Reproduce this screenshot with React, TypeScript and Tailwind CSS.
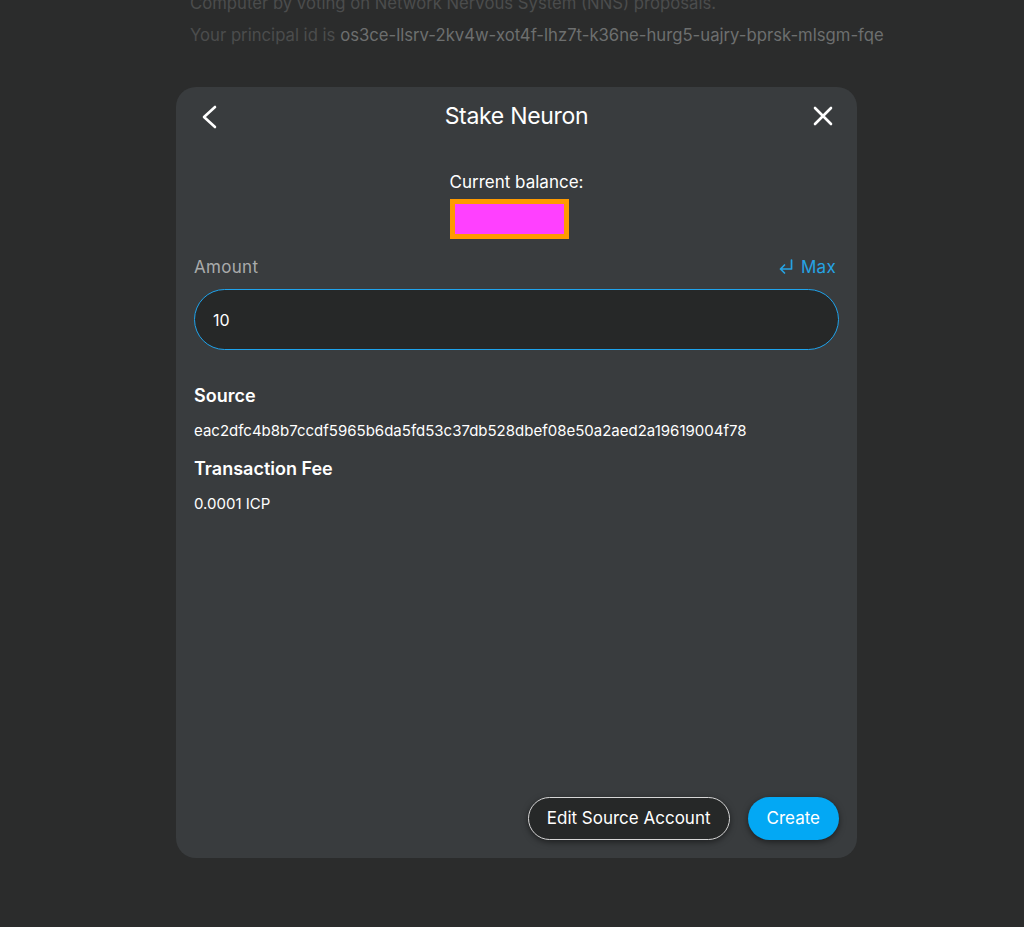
import React from "react";

const font = { fontFamily: "Inter, 'Noto Sans', sans-serif" };

function BackIcon() {
  return (
    <svg width="24" height="26" viewBox="0 0 24 26" fill="none">
      <polyline points="17,3 6,13 17,23" stroke="white" strokeWidth="2.6" strokeLinecap="round" strokeLinejoin="round" />
    </svg>
  );
}

function CloseIcon() {
  return (
    <svg width="20" height="20" viewBox="0 0 20 20" fill="none">
      <path d="M2 2 L18 18 M18 2 L2 18" stroke="white" strokeWidth="2.6" strokeLinecap="round" />
    </svg>
  );
}

function ReturnIcon() {
  return (
    <svg width="16" height="18" viewBox="0 0 16 18" fill="none">
      <path d="M13.5 2 V11 H2.5 M6.5 7 L2.5 11 L6.5 15" stroke="#26a3e4" strokeWidth="1.7" strokeLinecap="round" strokeLinejoin="round" />
    </svg>
  );
}

export default function App() {
  return (
    <div className="min-h-[927px] bg-[#2b2c2c] overflow-hidden" style={font}>
      {/* page content behind the modal */}
      <div className="-mt-[13px] pl-[190px] text-[16.7px] leading-[32px] text-[#4b4d4d]">
        <p>Computer by voting on Network Nervous System (NNS) proposals.</p>
        <p>
          Your principal id is{" "}
          <span className="text-[#6d6f6f]">os3ce-llsrv-2kv4w-xot4f-lhz7t-k36ne-hurg5-uajry-bprsk-mlsgm-fqe</span>
        </p>
      </div>

      {/* modal */}
      <div className="ml-[176px] mt-[36px] flex h-[771px] w-[681px] flex-col rounded-[20px] bg-[#393c3e] px-[18px]">
        <div className="flex h-[58px] items-center justify-between">
          <button className="flex items-center justify-center w-[30px] ml-[1px] mt-[1px]">
            <BackIcon />
          </button>
          <h2 className="text-[23px] text-white tracking-[-0.3px] mt-[1px]">Stake Neuron</h2>
          <button className="flex items-center justify-center w-[30px] mr-[1px]">
            <CloseIcon />
          </button>
        </div>

        <div className="mt-[27px] flex justify-center">
          <div className="flex flex-col items-start">
            <p className="text-[17px] leading-[20px] text-white">Current balance:</p>
            <div className="mt-[7px] h-[40px] w-[119px] border-[5px] border-[#ff9a00] bg-[#ff40ff]" />
          </div>
        </div>

        <div className="mt-[18px] flex items-center justify-between text-[17px] leading-[20px]">
          <span className="text-[#a9abab] tracking-[0.3px]">Amount</span>
          <span className="flex items-center gap-[7px] text-[#26a3e4] mr-[3px] tracking-[0.3px]">
            <ReturnIcon />
            Max
          </span>
        </div>

        <div className="mt-[12px] flex h-[61px] items-center rounded-full border-[1.5px] border-[#1fa3ec] bg-[#262828] px-[18px]">
          <span className="text-[16px] text-white">10</span>
        </div>

        <div className="mt-[35px] text-white">
          <h3 className="text-[18px] font-semibold leading-[22px]">Source</h3>
          <p className="mt-[15px] text-[15px] leading-[18px]">eac2dfc4b8b7ccdf5965b6da5fd53c37db528dbef08e50a2aed2a19619004f78</p>
          <h3 className="mt-[18px] text-[18px] font-semibold leading-[22px]">Transaction Fee</h3>
          <p className="mt-[15px] text-[15px] leading-[18px]">0.0001 ICP</p>
        </div>

        <div className="mt-auto mb-[18px] flex justify-end gap-[18px]">
          <button className="h-[43px] rounded-full border-[1.5px] border-[#d6d6d6] bg-[#262828] px-[18px] text-[17px] text-white shadow-[0_2px_6px_rgba(0,0,0,0.5)]">
            Edit Source Account
          </button>
          <button className="h-[43px] rounded-full bg-[#03a8f4] px-[19px] text-[17px] text-white shadow-[0_2px_6px_rgba(0,0,0,0.5)]">
            Create
          </button>
        </div>
      </div>
    </div>
  );
}
